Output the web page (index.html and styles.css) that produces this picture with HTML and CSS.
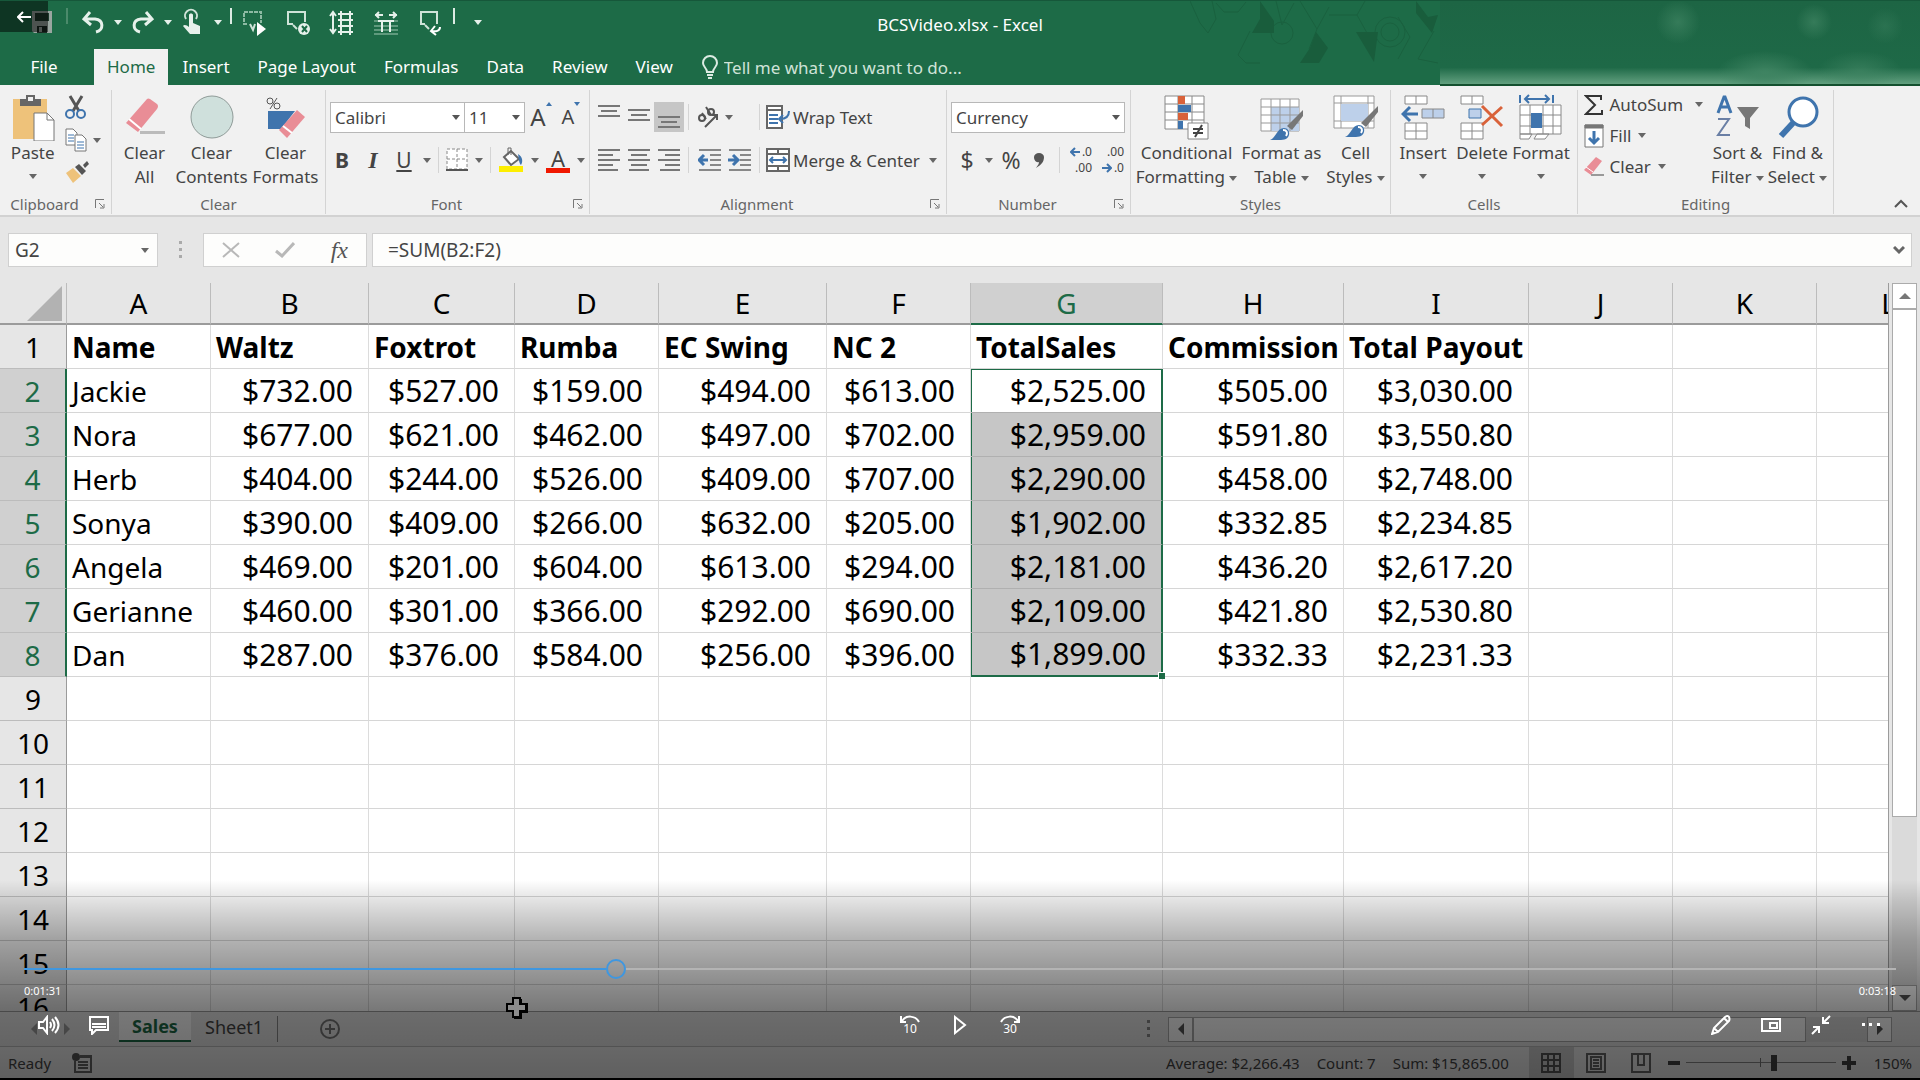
FILE: index.html
```html
<!DOCTYPE html>
<html lang="en">
<head>
    <meta charset="utf-8">
    <title>BCSVideo.xlsx - Excel</title>
    <link rel="stylesheet" href="styles.css">
</head>
<body>
<div class="app">

    <!-- Title bar -->
    <header class="top">
        <svg class="pattern" width="730" height="85" viewBox="0 0 730 85" aria-hidden="true">
            <defs>
                <linearGradient id="fade" x1="0" y1="0" x2="0" y2="1">
                    <stop offset="0" stop-color="#1d6544"/>
                    <stop offset=".8" stop-color="#1e6947"/>
                    <stop offset="1" stop-color="#62a07f"/>
                </linearGradient>
                <radialGradient id="spot">
                    <stop offset="0" stop-color="#3f8462"/>
                    <stop offset="1" stop-color="#3f8462" stop-opacity="0"/>
                </radialGradient>
            </defs>
            <g fill="none" stroke="#1a613f" stroke-width="1">
                <path d="M0 0l10 22 8 10 8-14-4-18M26 2l8 9h14l8-10M60 30l-12 24 8 8h14M86 0l6 24 12-22M110 0l17 28 12-22M127 28l-8 20M139 14h28l8-14M167 14l10 18M208 16l12 20-12 22M244 30l-16 28 20 4"/>
                <circle cx="92" cy="32" r="11"/>
                <circle cx="200" cy="31" r="15"/>
                <circle cx="200" cy="31" r="9"/>
            </g>
            <path fill="#195d3c" d="M70 0l14 20v12H62l8-14zM126 31l12 16-9 15h-19l10-15zM166 31h22l-4 30zM226 0l12 16 10-2-6 18-16-20z"/>
            <path fill="url(#fade)" d="M250 0h480v83H250z"/>
            <circle cx="488" cy="21" r="22" fill="url(#spot)" opacity=".7"/>
            <circle cx="624" cy="21" r="18" fill="url(#spot)" opacity=".7"/>
            <circle cx="695" cy="25" r="18" fill="url(#spot)" opacity=".4"/>
            <ellipse cx="575" cy="72" rx="48" ry="22" fill="url(#spot)"/>
            <ellipse cx="670" cy="70" rx="42" ry="20" fill="url(#spot)" opacity=".7"/>
            <path fill="#14502f" d="M250 83h480v2H250z"/>
        </svg>

        <div class="title-row">
            <div class="quick">
                <button aria-label="Save"><svg width="24" height="26" viewBox="0 0 24 26"><path fill="#9aa6a0" d="M2 2h20v22H4l-2-2z"/><path fill="#203a2d" d="M5 4h14v8H5z"/><path fill="#1b2b23" d="M7 17h10v7H7z"/><path fill="#9aa6a0" d="M9 18h3v5H9z"/></svg></button>
                <span class="bar dim"></span>
                <button aria-label="Undo"><svg width="26" height="26" viewBox="0 0 26 26" fill="none" stroke="#e6f1eb" stroke-width="3"><path d="M10 3L4 10l7 6M5 10h10c9 1 9 11 1 13"/></svg></button>
                <span class="caret light"></span>
                <button aria-label="Redo"><svg width="26" height="26" viewBox="0 0 26 26" fill="none" stroke="#e6f1eb" stroke-width="3"><path d="M16 3l6 7-7 6M21 10H11c-9 1-9 11-1 13"/></svg></button>
                <span class="caret light"></span>
                <button aria-label="Touch mode"><svg width="26" height="28" viewBox="0 0 26 28"><path d="M6 11a6 6 0 1 1 10 0" fill="none" stroke="#cfe3d8" stroke-width="2"/><path fill="#e6f1eb" d="M9 7c0-2 4-2 4 0v8l7 3v8H10l-7-8c1-2 4-1 6 1z"/></svg></button>
                <span class="caret light"></span>
                <span class="bar"></span>
            </div>
            <div class="quick wide">
                <button aria-label="Run"><svg width="26" height="28" viewBox="0 0 26 28" fill="none"><path d="M6 16H3V4h17v11" stroke="#8dbaa3" stroke-width="2" stroke-dasharray="4 1"/><path d="M9 16l3 6 2-6" stroke="#cfe3d8" stroke-width="2"/><path fill="#fff" d="M16 14l9 7-9 7z"/></svg></button>
                <button aria-label="Remove"><svg width="26" height="28" viewBox="0 0 26 28" fill="none"><path d="M8 16H3V4h17v10M8 17l4 4" stroke="#cfe3d8" stroke-width="2"/><circle cx="19" cy="21" r="6" fill="#e6f1eb"/><path d="M17 18l5 6m0-6l-5 6" stroke="#1d6b47" stroke-width="2"/></svg></button>
                <button aria-label="Row height"><svg width="26" height="28" viewBox="0 0 26 28" fill="none" stroke="#e6f1eb" stroke-width="2"><path d="M4 4v21M1 8l3-4 3 4M1 21l3 4 3-4"/><path d="M9 6h15M9 12h15M9 18h15M9 24h15M12 3v24M21 3v24"/></svg></button>
                <button aria-label="Column width"><svg width="26" height="28" viewBox="0 0 26 28" fill="none" stroke="#e6f1eb" stroke-width="2"><path d="M2 7h8M16 7h8M6 4L3 7l3 3M20 4l3 3-3 3"/><path d="M1 13h24M1 18h24M1 22h24M1 26h24" stroke="#5f9a7d"/><path d="M9 13v11M17 13v11M5 13h16"/></svg></button>
                <button aria-label="Send"><svg width="26" height="28" viewBox="0 0 26 28" fill="none" stroke="#cfe3d8" stroke-width="2"><path d="M8 16H4V4h16v12M8 17l4 4"/><path d="M23 19c0 4-4 5-9 4M18 18l-4 5 5 4" stroke="#fff"/></svg></button>
            </div>
            <div class="quick tail">
                <span class="bar"></span>
                <button aria-label="Customize toolbar"><span class="caret light"></span></button>
            </div>
            <h1 class="doc-title">BCSVideo.xlsx - Excel</h1>
        </div>

        <nav class="tabs">
            <a href="#" class="tab file">File</a>
            <a href="#" class="tab active">Home</a>
            <a href="#" class="tab">Insert</a>
            <a href="#" class="tab">Page Layout</a>
            <a href="#" class="tab">Formulas</a>
            <a href="#" class="tab">Data</a>
            <a href="#" class="tab">Review</a>
            <a href="#" class="tab">View</a>
            <svg class="bulb" width="18" height="24" viewBox="0 0 18 24" fill="none" stroke="#dcebe3" stroke-width="2"><path d="M6 17c0-4-4-5-4-9a7 7 0 0 1 14 0c0 4-4 5-4 9z"/><path d="M6 20h6M7 23h4"/></svg>
            <input class="tell" type="text" aria-label="Tell me" placeholder="Tell me what you want to do...">
        </nav>

        <button class="back" aria-label="Back"><svg width="14" height="12" viewBox="0 0 14 12" fill="none" stroke="#fff" stroke-width="2"><path d="M6 1L1 6l5 5M1 6h13"/></svg></button>
    </header>

    <!-- Ribbon -->
    <div class="ribbon">
        <section class="group clipboard">
            <div class="body">
                <button class="big">
                    <svg width="44" height="48" viewBox="0 0 44 48"><path fill="#eec27a" d="M2 6h34v40H2z"/><path fill="#666" d="M9 6h6V2h9v4h6v7H9z"/><path fill="#f0f0f0" d="M17 4h5v4h-5z"/><path fill="#fff" stroke="#777" d="M23 20h13l7 7v21H23z"/><path fill="none" stroke="#777" d="M36 20v7h7"/></svg>
                    <span>Paste</span><span class="caret"></span>
                </button>
                <div class="stack">
                    <button aria-label="Cut"><svg width="22" height="24" viewBox="0 0 22 24" fill="none" stroke-width="2"><path d="M5 1l9 15M17 1L8 16" stroke="#555" stroke-width="3"/><circle cx="5" cy="19" r="4" stroke="#3f74ad"/><circle cx="16" cy="19" r="4" stroke="#3f74ad"/></svg></button>
                    <button aria-label="Copy"><svg width="22" height="24" viewBox="0 0 22 24" fill="#fff" stroke="#777"><path d="M1 1h7l4 4v12H1z"/><path d="M10 7h7l4 4v12H10z"/><path d="M3 7h6M3 10h6M3 13h6M12 14h7M12 17h7M12 20h7" stroke="#3f74ad"/></svg><span class="caret"></span></button>
                    <button aria-label="Format painter"><svg width="24" height="22" viewBox="0 0 24 22"><path fill="#eec27a" d="M1 12l7-5 8 8-8 7z"/><path fill="#555" d="M10 6l4-3 7 7-4 4zM18 4l4-4 2 3-4 4z"/></svg></button>
                </div>
            </div>
            <div class="label"><h2>Clipboard</h2><button class="launch" aria-label="Clipboard settings"><svg width="10" height="10" viewBox="0 0 10 10" fill="none" stroke="#777"><path d="M.5 9V.5H9M4 4l4 4M9 5v4H5"/></svg></button></div>
        </section>

        <section class="group clear">
            <div class="body">
                <button class="big">
                    <svg width="42" height="46" viewBox="0 0 42 46"><path fill="#e98d96" d="M2 29L23 5q1-1 3 0l7 5q2 2 0 5L14 38z"/><path stroke="#fff" stroke-width="2" d="M5 25l12 10"/><path fill="#bbb" d="M16 37h25v3H16z"/></svg>
                    <span>Clear<br>All</span>
                </button>
                <button class="big">
                    <svg width="44" height="46" viewBox="0 0 44 46"><circle cx="22" cy="23" r="21" fill="#cfe0dc" stroke="#8f9b98"/></svg>
                    <span>Clear<br>Contents</span>
                </button>
                <button class="big">
                    <svg width="42" height="46" viewBox="0 0 42 46"><g fill="none" stroke="#555"><circle cx="5" cy="7" r="3"/><circle cx="12" cy="12" r="3"/><path d="M12 4L5 15"/></g><path fill="#3f74ad" d="M3 17h27L16 35H3z"/><path fill="#e98d96" d="M14 36l18-20 8 7-18 21z"/><path stroke="#fff" stroke-width="2" d="M18 32l9 7"/></svg>
                    <span>Clear<br>Formats</span>
                </button>
            </div>
            <div class="label"><h2>Clear</h2></div>
        </section>

        <section class="group font">
            <div class="rows">
                <div class="row">
                    <select class="face" aria-label="Font"><option>Calibri</option></select>
                    <select class="size" aria-label="Font size"><option>11</option></select>
                    <button class="grow" aria-label="Increase font size">A<i class="up"></i></button>
                    <button class="shrink" aria-label="Decrease font size">A<i class="down"></i></button>
                </div>
                <div class="row styles-row">
                    <button class="glyph"><b>B</b></button>
                    <button class="glyph serif"><i>I</i></button>
                    <button class="glyph"><u>U</u></button>
                    <span class="caret"></span>
                    <span class="rule"></span>
                    <button aria-label="Borders"><svg width="22" height="24" viewBox="0 0 22 24" fill="none" stroke="#888" stroke-dasharray="3 2"><path fill="#fff" d="M1 1h20v20H1zM11 1v20M1 11h20"/><path d="M0 22h22" stroke="#555" stroke-width="2" stroke-dasharray="none"/></svg></button>
                    <span class="caret"></span>
                    <span class="rule"></span>
                    <button aria-label="Fill color"><svg width="26" height="26" viewBox="0 0 26 26"><path fill="#fff" stroke="#666" stroke-width="2" d="M6 10l7-6 8 8-8 6z"/><path fill="none" stroke="#666" d="M10 8V1h3v7"/><path fill="#3f74ad" d="M20 7c5 3 5 8 3 11-2-2-2-5-3-11z"/><path fill="#fdee00" d="M1 19h24v6H1z"/></svg></button>
                    <span class="caret"></span>
                    <button class="ink" aria-label="Font color">A</button>
                    <span class="caret"></span>
                </div>
            </div>
            <div class="label"><h2>Font</h2><button class="launch" aria-label="Font settings"><svg width="10" height="10" viewBox="0 0 10 10" fill="none" stroke="#777"><path d="M.5 9V.5H9M4 4l4 4M9 5v4H5"/></svg></button></div>
        </section>

        <section class="group align">
            <div class="rows">
                <div class="row">
                    <button class="al" aria-label="Top align"><svg width="22" height="24" viewBox="0 0 22 24" stroke="#777" stroke-width="2"><path d="M0 1h22M3 6h16M0 11h22"/></svg></button>
                    <button class="al" aria-label="Middle align"><svg width="22" height="24" viewBox="0 0 22 24" stroke="#777" stroke-width="2"><path d="M0 5h22M3 10h16M0 15h22"/></svg></button>
                    <button class="al on" aria-label="Bottom align"><svg width="22" height="24" viewBox="0 0 22 24" stroke="#777" stroke-width="2"><path d="M0 12h22M3 17h16M0 22h22"/></svg></button>
                    <span class="rule"></span>
                    <button class="orient" aria-label="Orientation"><svg width="22" height="22" viewBox="0 0 22 22" fill="none" stroke="#555" stroke-width="2"><circle cx="5" cy="12" r="3"/><path d="M5 7l4 6M9 1l5 8"/><circle cx="14" cy="6" r="3"/><path d="M8 21L20 9M15 9h5v5"/></svg></button>
                    <span class="caret"></span>
                    <span class="rule far"></span>
                    <button class="text"><svg width="24" height="24" viewBox="0 0 24 24" fill="#fff" stroke="#666"><path d="M1 1h15v22H1zM1 5h15" stroke-width="2"/><path d="M3 10h9M3 14h9M3 18h9" stroke="#3f74ad" stroke-width="2"/><path d="M23 6c0 6-4 8-9 8M17 10l-4 4 4 4" fill="none" stroke="#3f74ad" stroke-width="2"/></svg>Wrap Text</button>
                </div>
                <div class="row">
                    <button class="al" aria-label="Align left"><svg width="22" height="24" viewBox="0 0 22 24" stroke="#777" stroke-width="2"><path d="M0 2h22M0 7h15M0 12h22M0 17h15M0 22h20"/></svg></button>
                    <button class="al" aria-label="Center"><svg width="22" height="24" viewBox="0 0 22 24" stroke="#777" stroke-width="2"><path d="M0 2h22M3 7h16M0 12h22M3 17h16M1 22h20"/></svg></button>
                    <button class="al" aria-label="Align right"><svg width="22" height="24" viewBox="0 0 22 24" stroke="#777" stroke-width="2"><path d="M0 2h22M7 7h15M0 12h22M7 17h15M2 22h20"/></svg></button>
                    <span class="rule"></span>
                    <button class="al" aria-label="Decrease indent"><svg width="24" height="24" viewBox="0 0 24 24" fill="none" stroke="#888" stroke-width="2"><path d="M1 2h22M12 7h11M12 12h11M12 17h11M1 22h22"/><path d="M10 12H2M6 7l-5 5 5 5" stroke="#3f74ad" stroke-width="3"/></svg></button>
                    <button class="al" aria-label="Increase indent"><svg width="24" height="24" viewBox="0 0 24 24" fill="none" stroke="#888" stroke-width="2"><path d="M1 2h22M12 7h11M12 12h11M12 17h11M1 22h22"/><path d="M0 12h9M5 7l5 5-5 5" stroke="#3f74ad" stroke-width="3"/></svg></button>
                    <span class="rule"></span>
                    <button class="text"><svg width="24" height="24" viewBox="0 0 24 24" fill="#fff" stroke="#666" stroke-width="2"><path d="M1 1h22v22H1zM1 6h22M1 18h22M12 1v5M12 18v5"/><path d="M4 12h16M7 9l-3 3 3 3M17 9l3 3-3 3" fill="none" stroke="#3f74ad"/></svg>Merge &amp; Center<span class="caret"></span></button>
                </div>
            </div>
            <div class="label"><h2>Alignment</h2><button class="launch" aria-label="Alignment settings"><svg width="10" height="10" viewBox="0 0 10 10" fill="none" stroke="#777"><path d="M.5 9V.5H9M4 4l4 4M9 5v4H5"/></svg></button></div>
        </section>

        <section class="group number">
            <div class="rows">
                <div class="row"><select class="format" aria-label="Number format"><option>Currency</option></select></div>
                <div class="row">
                    <button class="sign">$</button>
                    <span class="caret"></span>
                    <button class="sign">%</button>
                    <button class="comma" aria-label="Comma style"><svg width="12" height="16" viewBox="0 0 12 16"><path fill="#555" d="M1 5a5 4 0 0 1 10 0c0 5-3 8-8 11 2-3 3-4 3-6-3 1-5-2-5-5z"/></svg></button>
                    <span class="rule"></span>
                    <button class="dec"><span><svg width="10" height="10" viewBox="0 0 10 10" fill="none" stroke="#3f74ad" stroke-width="2"><path d="M10 5H2M5 1L1 5l4 4"/></svg>.0</span><span>.00</span></button>
                    <button class="dec"><span>.00</span><span><svg width="10" height="10" viewBox="0 0 10 10" fill="none" stroke="#3f74ad" stroke-width="2"><path d="M0 5h8M5 1l4 4-4 4"/></svg>.0</span></button>
                </div>
            </div>
            <div class="label"><h2>Number</h2><button class="launch" aria-label="Number settings"><svg width="10" height="10" viewBox="0 0 10 10" fill="none" stroke="#777"><path d="M.5 9V.5H9M4 4l4 4M9 5v4H5"/></svg></button></div>
        </section>

        <section class="group styles">
            <div class="body">
                <button class="big">
                    <svg width="46" height="46" viewBox="0 0 46 46"><path fill="#fff" stroke="#888" d="M1 2h39v33H1zM1 10h39M1 18h39M1 26h39M14 2v33M28 2v33"/><path fill="#d9623a" d="M14 2h7v8h-7zM14 19h10v7H14z"/><path fill="#3f74ad" d="M14 11h13v7H14zM14 27h5v8h-5z"/><path fill="#fff" stroke="#888" d="M24 29h20v16H24z"/><path stroke="#444" stroke-width="2" d="M29 35h10M29 39h10M38 31l-7 12"/></svg>
                    <span>Conditional<br>Formatting <i class="caret"></i></span>
                </button>
                <button class="big">
                    <svg width="46" height="46" viewBox="0 0 46 46"><path fill="#fff" stroke="#999" d="M2 5h38v32H2z"/><path fill="#bdd0ea" d="M12 13h28v24H12z"/><path fill="none" stroke="#999" d="M2 13h38M2 21h38M2 29h38M12 5v32M21 5v32M31 5v32"/><path fill="#777" d="M44 16v6L33 36l-5-4z"/><path fill="#3f74ad" d="M11 46c6-2 7-12 14-12s8 12-3 12z"/><path d="M24 36c4 0 5 3 3 6" fill="none" stroke="#fff" stroke-width="2"/></svg>
                    <span>Format as<br>Table <i class="caret"></i></span>
                </button>
                <button class="big">
                    <svg width="46" height="46" viewBox="0 0 46 46"><path fill="#fff" stroke="#999" d="M1 2h40v32H1zM1 9h40M1 27h40M8 2v32M35 2v32"/><path fill="#bdd0ea" d="M8 10h27v17H8z"/><path fill="#777" d="M45 12v6L33 33l-5-4z"/><path fill="#3f74ad" d="M12 43c6-2 7-12 14-12s8 12-3 12z"/><path d="M25 33c4 0 5 3 3 6" fill="none" stroke="#fff" stroke-width="2"/></svg>
                    <span>Cell<br>Styles <i class="caret"></i></span>
                </button>
            </div>
            <div class="label"><h2>Styles</h2></div>
        </section>

        <section class="group cells">
            <div class="body">
                <button class="big">
                    <svg width="44" height="46" viewBox="0 0 44 46" fill="#fff" stroke="#888"><path d="M4 2h22v8H4zM15 2v8M4 29h22v16H4zM15 29v16M4 37h22"/><path fill="#bdd0ea" d="M21 15h22v9H21zM32 15v9"/><path d="M17 20H2M9 13l-7 7 7 7" fill="none" stroke="#3f74ad" stroke-width="3"/></svg>
                    <span>Insert</span><span class="caret"></span>
                </button>
                <button class="big">
                    <svg width="44" height="46" viewBox="0 0 44 46" fill="#fff" stroke="#888"><path d="M1 2h22v8H1zM12 2v8M1 29h22v16H1zM12 29v16M1 37h22"/><path fill="#bdd0ea" stroke="#3f74ad" d="M9 15h12v9H9z"/><path d="M22 12l20 20M42 13L22 31" fill="none" stroke="#d9623a" stroke-width="3"/></svg>
                    <span>Delete</span><span class="caret"></span>
                </button>
                <button class="big">
                    <svg width="44" height="46" viewBox="0 0 44 46" fill="#fff" stroke="#888"><path d="M1 11h41v29H1zM1 21h41M1 32h41M11 11v29M24 11v29M34 11v29M1 40h12l-3 5H1zM15 45l3-5h12l-4 5z"/><path fill="#3f74ad" stroke="none" d="M12 19h11v15H12z"/><path d="M6 5h24M10 1L6 5l4 4M26 1l4 4-4 4M1 1v8M34 1v8" fill="none" stroke="#3f74ad" stroke-width="2"/></svg>
                    <span>Format</span><span class="caret"></span>
                </button>
            </div>
            <div class="label"><h2>Cells</h2></div>
        </section>

        <section class="group editing">
            <div class="body">
                <div class="lines">
                    <button class="text"><svg width="20" height="20" viewBox="0 0 20 20" fill="none" stroke="#333" stroke-width="2"><path d="M17 5V1H2l9 9-9 9h16v-4"/></svg>AutoSum<span class="caret"></span></button>
                    <button class="text"><svg width="20" height="24" viewBox="0 0 20 24" fill="#fff" stroke="#777"><path d="M1 1h18v22H1z"/><path fill="#777" d="M1 1h18v3H1z"/><path d="M10 7v12M5 14l5 5 5-5" fill="none" stroke="#3f74ad" stroke-width="3"/></svg>Fill<span class="caret"></span></button>
                    <button class="text"><svg width="20" height="22" viewBox="0 0 20 22"><path fill="#e98d96" d="M0 14L12 1l6 4L7 19z"/><path stroke="#fff" d="M2 11l7 5"/><path fill="#999" d="M7 18h13v2H7z"/></svg>Clear<span class="caret"></span></button>
                </div>
                <button class="big">
                    <svg width="44" height="46" viewBox="0 0 44 46" fill="none" stroke-width="2"><path d="M2 19L8 3h1l6 16M4 13h9" stroke="#3f74ad" stroke-width="3"/><path d="M2 25h11L2 41h12" stroke="#6a7fa5"/><path fill="#777" d="M21 13h22l-9 11v11l-5-3v-8z"/></svg>
                    <span>Sort &amp;<br>Filter <i class="caret"></i></span>
                </button>
                <button class="big">
                    <svg width="44" height="46" viewBox="0 0 44 46" fill="#fff" stroke="#3f74ad"><circle cx="27" cy="18" r="14" stroke-width="3"/><path d="M17 29L5 42" stroke-width="6"/></svg>
                    <span>Find &amp;<br>Select <i class="caret"></i></span>
                </button>
            </div>
            <div class="label"><h2>Editing</h2></div>
        </section>

        <button class="collapse" aria-label="Collapse ribbon"><svg width="14" height="10" viewBox="0 0 14 10" fill="none" stroke="#555" stroke-width="2"><path d="M1 8l6-6 6 6"/></svg></button>
    </div>

    <!-- Formula bar -->
    <div class="formula-bar">
        <div class="name-box"><input type="text" value="G2" aria-label="Name box"><span class="caret"></span></div>
        <span class="grip"></span>
        <div class="fx-box">
            <button aria-label="Cancel"><svg width="18" height="16" viewBox="0 0 18 16" stroke="#b8b8b8" stroke-width="2"><path d="M1 1l16 14M17 1L1 15"/></svg></button>
            <button aria-label="Enter"><svg width="20" height="16" viewBox="0 0 20 16" fill="none" stroke="#b8b8b8" stroke-width="3"><path d="M1 9l6 5L19 1"/></svg></button>
            <button class="fx"><i>fx</i></button>
        </div>
        <div class="formula"><input type="text" value="=SUM(B2:F2)" aria-label="Formula"><svg width="12" height="9" viewBox="0 0 12 9" fill="none" stroke="#666" stroke-width="3"><path d="M1 1l5 5 5-5"/></svg></div>
    </div>

    <!-- Sheet -->
    <main class="sheet">
        <div class="grid">
            <table>
                <colgroup><col class="w67"><col class="w144"><col class="w158"><col class="w146"><col class="w144"><col class="w168"><col class="w144"><col class="w192"><col class="w181"><col class="w185"><col class="w144"><col class="w144"><col class="w144"></colgroup>
                <thead>
                    <tr><th class="corner"><svg width="35" height="35" viewBox="0 0 35 35"><path fill="#b2b2b2" d="M35 0v35H0z"/></svg></th><th>A</th><th>B</th><th>C</th><th>D</th><th>E</th><th>F</th><th class="picked">G</th><th>H</th><th>I</th><th>J</th><th>K</th><th>L</th></tr>
                </thead>
                <tbody>
                    <tr class="names"><th>1</th><td>Name</td><td>Waltz</td><td>Foxtrot</td><td>Rumba</td><td>EC Swing</td><td>NC 2</td><td>TotalSales</td><td>Commission</td><td>Total Payout</td><td></td><td></td><td></td></tr>
                    <tr class="data first"><th>2</th><td>Jackie</td><td>$732.00</td><td>$527.00</td><td>$159.00</td><td>$494.00</td><td>$613.00</td><td class="sel">$2,525.00</td><td>$505.00</td><td>$3,030.00</td><td></td><td></td><td></td></tr>
                    <tr class="data"><th>3</th><td>Nora</td><td>$677.00</td><td>$621.00</td><td>$462.00</td><td>$497.00</td><td>$702.00</td><td class="sel">$2,959.00</td><td>$591.80</td><td>$3,550.80</td><td></td><td></td><td></td></tr>
                    <tr class="data"><th>4</th><td>Herb</td><td>$404.00</td><td>$244.00</td><td>$526.00</td><td>$409.00</td><td>$707.00</td><td class="sel">$2,290.00</td><td>$458.00</td><td>$2,748.00</td><td></td><td></td><td></td></tr>
                    <tr class="data"><th>5</th><td>Sonya</td><td>$390.00</td><td>$409.00</td><td>$266.00</td><td>$632.00</td><td>$205.00</td><td class="sel">$1,902.00</td><td>$332.85</td><td>$2,234.85</td><td></td><td></td><td></td></tr>
                    <tr class="data"><th>6</th><td>Angela</td><td>$469.00</td><td>$201.00</td><td>$604.00</td><td>$613.00</td><td>$294.00</td><td class="sel">$2,181.00</td><td>$436.20</td><td>$2,617.20</td><td></td><td></td><td></td></tr>
                    <tr class="data"><th>7</th><td>Gerianne</td><td>$460.00</td><td>$301.00</td><td>$366.00</td><td>$292.00</td><td>$690.00</td><td class="sel">$2,109.00</td><td>$421.80</td><td>$2,530.80</td><td></td><td></td><td></td></tr>
                    <tr class="data last"><th>8</th><td>Dan</td><td>$287.00</td><td>$376.00</td><td>$584.00</td><td>$256.00</td><td>$396.00</td><td class="sel">$1,899.00<i class="handle"></i></td><td>$332.33</td><td>$2,231.33</td><td></td><td></td><td></td></tr>
                    <tr><th>9</th><td></td><td></td><td></td><td></td><td></td><td></td><td></td><td></td><td></td><td></td><td></td><td></td></tr>
                    <tr><th>10</th><td></td><td></td><td></td><td></td><td></td><td></td><td></td><td></td><td></td><td></td><td></td><td></td></tr>
                    <tr><th>11</th><td></td><td></td><td></td><td></td><td></td><td></td><td></td><td></td><td></td><td></td><td></td><td></td></tr>
                    <tr><th>12</th><td></td><td></td><td></td><td></td><td></td><td></td><td></td><td></td><td></td><td></td><td></td><td></td></tr>
                    <tr><th>13</th><td></td><td></td><td></td><td></td><td></td><td></td><td></td><td></td><td></td><td></td><td></td><td></td></tr>
                    <tr><th>14</th><td></td><td></td><td></td><td></td><td></td><td></td><td></td><td></td><td></td><td></td><td></td><td></td></tr>
                    <tr><th>15</th><td></td><td></td><td></td><td></td><td></td><td></td><td></td><td></td><td></td><td></td><td></td><td></td></tr>
                    <tr><th>16</th><td></td><td></td><td></td><td></td><td></td><td></td><td></td><td></td><td></td><td></td><td></td><td></td></tr>
                </tbody>
            </table>
        </div>
        <div class="vscroll">
            <button aria-label="Scroll up"><i class="arrow up-arrow"></i></button>
            <div class="thumb"></div>
            <div class="track"></div>
            <button aria-label="Scroll down"><i class="arrow down-arrow"></i></button>
        </div>
    </main>

    <!-- Sheet tabs -->
    <div class="sheet-bar">
        <div class="sheet-nav"><i class="arrow left-arrow"></i><i class="arrow right-arrow"></i></div>
        <button class="sheet-tab current">Sales</button>
        <button class="sheet-tab">Sheet1</button>
        <button class="add" aria-label="New sheet"><svg width="22" height="22" viewBox="0 0 22 22" fill="none" stroke="#777" stroke-width="2"><circle cx="11" cy="11" r="9"/><path d="M11 6v10M6 11h10"/></svg></button>
        <span class="grip hgrip"></span>
        <div class="hscroll">
            <button aria-label="Scroll left"><i class="arrow left-arrow"></i></button>
            <div class="thumb"></div>
            <div class="track"></div>
            <button aria-label="Scroll right"><i class="arrow right-arrow"></i></button>
        </div>
    </div>

    <!-- Status bar -->
    <footer class="status">
        <span>Ready</span>
        <svg class="macro" width="22" height="20" viewBox="0 0 22 20"><path fill="none" stroke="#666" stroke-width="2" d="M4 8v11h16V3h-9M7 9h10M7 12h10M7 15h10"/><path fill="#666" d="M9 2h12v3H9z"/><circle cx="5" cy="4" r="4" fill="#555"/></svg>
        <div class="totals"><span>Average: $2,266.43</span><span>Count: 7</span><span>Sum: $15,865.00</span></div>
        <div class="views">
            <button class="on" aria-label="Normal"><svg width="20" height="20" viewBox="0 0 20 20" fill="none" stroke="#555" stroke-width="2"><path d="M1 1h18v18H1zM7 1v18M13 1v18M1 7h18M1 13h18"/></svg></button>
            <button aria-label="Page layout"><svg width="20" height="20" viewBox="0 0 20 20" fill="none" stroke="#666" stroke-width="2"><path d="M1 1h18v18H1zM5 4h10v12H5zM7 7h6M7 10h6M7 13h6"/></svg></button>
            <button aria-label="Page break preview"><svg width="20" height="20" viewBox="0 0 20 20" fill="none" stroke="#666" stroke-width="2"><path d="M1 1h18v18H1zM7 1v11h6V1M13 12V1"/></svg></button>
        </div>
        <div class="zoom">
            <button aria-label="Zoom out"><svg width="12" height="12" viewBox="0 0 12 12"><path fill="#444" d="M0 4h12v4H0z"/></svg></button>
            <input type="range" min="0" max="100" value="59" aria-label="Zoom">
            <button aria-label="Zoom in"><svg width="14" height="14" viewBox="0 0 14 14"><path fill="#444" d="M0 5h5V0h4v5h5v4H9v5H5V9H0z"/></svg></button>
            <span>150%</span>
        </div>
    </footer>
</div>

<!-- Video player controls, over the sheet -->
<div class="player">
    <input class="seek" type="range" min="0" max="1000" value="314" aria-label="Seek">
    <div class="times"><span>0:01:31</span><span>0:03:18</span></div>
    <div class="controls">
        <div class="set">
            <button aria-label="Volume"><svg width="22" height="20" viewBox="0 0 22 20"><path d="M1 7h4l4-5v16l-4-5H1zM12 7q2 3 0 6M14 4q5 6 0 12M17 2q7 8 0 16"/></svg></button>
            <button aria-label="Subtitles"><svg width="20" height="20" viewBox="0 0 20 20"><path d="M1 2h18v13H7l-4 4v-4H1zM3 9h14M3 12h14"/></svg></button>
        </div>
        <div class="set">
            <button class="skip" aria-label="Back 10 seconds"><svg width="20" height="8" viewBox="0 0 20 8"><path d="M19 7C15 0 6 0 2 6M1 1v6h5"/></svg>10</button>
            <button aria-label="Play"><svg width="14" height="20" viewBox="0 0 14 20"><path d="M2 2l10 8-10 8z"/></svg></button>
            <button class="skip" aria-label="Forward 30 seconds"><svg width="20" height="8" viewBox="0 0 20 8"><path d="M1 7C5 0 14 0 18 6M19 1v6h-5"/></svg>30</button>
        </div>
        <div class="set right">
            <button aria-label="Edit"><svg width="20" height="20" viewBox="0 0 20 20"><path d="M1 19l2-6L14 2q3-2 4 0t0 4L7 17zM3 13l4 4M13 3l4 4"/></svg></button>
            <button aria-label="Mini view"><svg width="20" height="14" viewBox="0 0 20 14"><path d="M1 1h18v12H1z"/><path d="M9 5h7v5H9z"/></svg></button>
            <button aria-label="Exit full screen"><svg width="20" height="20" viewBox="0 0 20 20"><path d="M19 1l-7 7M12 2v6h6M1 19l7-7M2 12h6v6"/></svg></button>
            <button aria-label="More"><svg width="18" height="4" viewBox="0 0 18 4"><path fill="#fff" stroke="none" d="M0 0h3v3H0zM7 0h3v3H7zM15 0h3v3h-3z"/></svg></button>
        </div>
    </div>
</div>
<svg class="pointer" width="24" height="24" viewBox="0 0 24 24" aria-hidden="true"><path d="M8 2h7v6h6v7h-6v6H8v-6H2V8h6z" fill="#8c8c8c" stroke="#000" stroke-width="2"/><path d="M16 3v5h6v8h-6v6H9" fill="none" stroke="#000" stroke-width="2"/></svg>
</body>
</html>
```
FILE: styles.css
```css
* {
    box-sizing: border-box;
}

body {
    margin: 0;
    font-family: "Noto Sans", "Open Sans", sans-serif;
    font-size: 17px;
    color: #444;
    background: #000;
    overflow: hidden;
}

button {
    background: none;
    border: none;
    padding: 0;
    margin: 0;
    font: inherit;
    color: inherit;
    display: flex;
    align-items: center;
    justify-content: center;
}

input, select {
    font: inherit;
    color: inherit;
    border: none;
    background: none;
    padding: 0;
    margin: 0;
}

h1, h2 {
    margin: 0;
    font-weight: normal;
}

svg {
    display: block;
    flex: none;
}

.app {
    display: flex;
    flex-direction: column;
    height: 100vh;
    border-bottom: 2px solid #000;
    background: #e6e6e6;
}

.caret {
    display: inline-block;
    flex: none;
    border: 4px solid transparent;
    border-top: 5px solid #666;
    border-bottom: none;
    vertical-align: middle;
}

.caret.light {
    border-top-color: #e6f1eb;
}

/* Title bar and tabs */
.top {
    position: relative;
    background: #1d6b47;
    border-top: 1px solid #16573a;
    color: #fff;
}

.pattern {
    position: absolute;
    top: 0;
    right: 0;
}

.title-row {
    position: relative;
    display: flex;
    height: 48px;
    padding-left: 30px;
}

.quick {
    display: flex;
    align-items: center;
    gap: 8px;
    height: 42px;
}

.quick.wide {
    gap: 18px;
    padding-left: 9px;
}

.quick.tail {
    gap: 19px;
    padding-left: 10px;
}

.bar {
    width: 2px;
    height: 16px;
    margin-bottom: 12px;
    background: #dcebe3;
}

.bar.dim {
    margin: 0 4px 12px;
    background: #4b8a6b;
}

.doc-title {
    position: absolute;
    left: 0;
    right: 0;
    top: 10px;
    font-size: 17px;
    line-height: 28px;
    text-align: center;
}

.tabs {
    position: relative;
    display: flex;
    align-items: center;
    height: 36px;
}

.tab {
    padding: 0 14px;
    line-height: 36px;
    color: #fff;
    text-decoration: none;
}

.tab.file {
    width: 88px;
    margin-right: 6px;
    text-align: center;
}

.tab.active {
    padding: 0 13px;
    background: #f1f1f1;
    color: #1d6b47;
}

.bulb {
    margin: 0 5px 0 14px;
}

.tell {
    width: 280px;
}

.tell::placeholder {
    color: #cfe3d8;
}

.back {
    position: absolute;
    left: 0;
    top: 0;
    width: 48px;
    height: 31px;
    background: rgba(0, 0, 0, 0.5);
}

/* Ribbon */
.ribbon {
    display: flex;
    height: 132px;
    background: #f1f1f1;
    border-bottom: 2px solid #d2d2d2;
}

.group {
    display: flex;
    flex-direction: column;
    flex: none;
    margin: 5px 0 1px;
    border-right: 1px solid #d4d4d4;
}

.clipboard { width: 112px; }
.clear { width: 214px; }
.font { width: 264px; }
.align { width: 357px; }
.number { width: 184px; }
.styles { width: 260px; }
.cells { width: 187px; }
.editing { width: 256px; }

.body {
    display: flex;
    justify-content: center;
    flex: 1;
}

.label {
    display: flex;
    align-items: center;
    height: 20px;
    padding: 0 6px;
}

.label h2 {
    flex: 1;
    font-size: 15px;
    line-height: 20px;
    text-align: center;
    color: #666;
}

.launch {
    margin-left: 12px;
}

.big {
    flex-direction: column;
    justify-content: flex-start;
    width: 70px;
    padding-top: 3px;
    line-height: 24px;
    white-space: nowrap;
}

.big svg {
    height: 48px;
}

.big > .caret {
    margin-top: 9px;
}

.clipboard .big { width: 66px; }
.clear .big:first-child { width: 64px; }
.clear .big:last-child { width: 78px; }
.styles .big:first-child { width: 104px; }
.styles .big:nth-child(2) { width: 86px; }
.styles .big:last-child { width: 62px; }
.cells .body { padding-right: 4px; }
.cells .big { width: 59px; }
.editing .big { width: 60px; }

.stack {
    display: flex;
    flex-direction: column;
    gap: 9px;
    width: 46px;
    padding-top: 5px;
    align-items: flex-start;
}

.stack button {
    gap: 6px;
}

.rows {
    flex: 1;
    display: flex;
    flex-direction: column;
    padding: 11px 4px 0;
    gap: 11px;
}

.row {
    display: flex;
    align-items: center;
    height: 32px;
}

.rule {
    width: 1px;
    height: 26px;
    background: #d4d4d4;
}

select {
    appearance: none;
    height: 31px;
    padding: 0 4px;
    border: 1px solid #b8b8b8;
    background: #fff url("data:image/svg+xml,%3Csvg xmlns='http://www.w3.org/2000/svg' width='8' height='5'%3E%3Cpath fill='%23555' d='M0 0h8L4 5z'/%3E%3C/svg%3E") no-repeat right 4px center;
}

.face { width: 135px; }
.size { width: 61px; margin-left: -1px; }
.format { width: 174px; }

.grow, .shrink {
    align-items: flex-end;
    width: 32px;
    font-size: 24px;
    line-height: 30px;
}

.shrink {
    font-size: 20px;
    width: 28px;
}

.up, .down {
    align-self: flex-start;
    border: 3px solid transparent;
    border-bottom: 4px solid #3f74ad;
    border-top: none;
}

.down {
    border-top: 4px solid #3f74ad;
    border-bottom: none;
}

.styles-row {
    gap: 7px;
}

.glyph {
    width: 24px;
    font-size: 21px;
}

.serif {
    font-family: "Liberation Serif", serif;
    font-weight: bold;
    font-size: 24px;
}

.ink {
    width: 24px;
    height: 26px;
    border-bottom: 5px solid #f01800;
    font-size: 22px;
    line-height: 20px;
}

.align .rows {
    padding-left: 4px;
}

.al {
    width: 30px;
    height: 30px;
}

.al.on {
    background: #c6c6c6;
}

.align .rule {
    margin: 0 6px 0 4px;
}

.orient {
    width: 26px;
    margin-right: 4px;
}

.align .rule.far {
    margin: 0 6px 0 26px;
}

.text {
    gap: 3px;
    white-space: nowrap;
}

.text .caret {
    margin-left: 6px;
}

.number .row:last-child {
    gap: 6px;
    padding-left: 4px;
}

.sign {
    width: 24px;
    font-size: 23px;
}

.comma {
    margin: 0 8px 0 4px;
}

.dec {
    flex-direction: column;
    align-items: flex-end;
    font-size: 12px;
    line-height: 16px;
    width: 26px;
}

.dec span {
    display: flex;
    align-items: center;
    gap: 2px;
}

.lines {
    display: flex;
    flex-direction: column;
    align-items: flex-start;
    gap: 6px;
    width: 124px;
    padding-top: 2px;
}

.lines .text {
    height: 25px;
    gap: 6px;
}

.lines .caret {
    margin-left: 1px;
}

.lines .text:first-child .caret {
    margin-left: 6px;
}

.collapse {
    align-self: flex-end;
    margin: 0 12px 6px auto;
}

/* Formula bar */
.formula-bar {
    display: flex;
    align-items: center;
    height: 66px;
    padding: 0 8px;
    font-size: 19px;
}

.name-box, .fx-box, .formula {
    display: flex;
    align-items: center;
    height: 34px;
    background: #fdfdfc;
    border: 1px solid #d0d0d0;
}

.name-box {
    width: 150px;
    padding: 0 8px 0 6px;
}

.name-box input {
    flex: 1;
    min-width: 0;
}

.grip {
    width: 3px;
    height: 18px;
    margin: 0 21px;
    background: repeating-linear-gradient(#aaa 0 3px, transparent 3px 7px);
}

.fx-box {
    width: 164px;
    justify-content: space-between;
    padding: 0 18px;
    margin-right: 5px;
}

.fx {
    font-family: "Liberation Serif", serif;
    font-size: 24px;
    color: #555;
}

.formula {
    flex: 1;
    padding: 0 6px 0 15px;
}

.formula input {
    flex: 1;
}

/* Sheet */
.sheet {
    display: flex;
    flex: 1;
    min-height: 0;
}

.grid {
    flex: 1;
    min-width: 0;
    overflow: hidden;
    border-right: 1px solid #9b9b9b;
}

table {
    width: max-content;
    border-spacing: 0;
    color: #000;
    font-size: 28px;
}

.w67 { width: 67px; }
.w144 { width: 144px; }
.w146 { width: 146px; }
.w158 { width: 158px; }
.w168 { width: 168px; }
.w181 { width: 181px; }
.w185 { width: 185px; }
.w192 { width: 192px; }

th {
    padding: 0;
    font-weight: normal;
    background: #e6e6e6;
    border-right: 1px solid #bcbcbc;
}

thead th {
    height: 42px;
    border-bottom: 2px solid #9b9b9b;
}

.corner svg {
    margin: 0 4px 0 auto;
}

th.picked {
    background: #d0d0d0;
    color: #1d6b47;
    border-bottom-color: #1d6b47;
}

tbody th, td {
    height: 44px;
    border-bottom: 1px solid #d6d6d6;
}

tbody th {
    border-right-color: #9b9b9b;
    border-bottom-color: #bcbcbc;
}

td {
    padding: 0 15px 0 5px;
    line-height: 36px;
    background: #fff;
    border-right: 1px solid #dcdcdc;
    text-align: right;
    white-space: nowrap;
}

td:nth-child(2) {
    text-align: left;
}

.names td {
    padding-right: 0;
    font-weight: bold;
    text-align: left;
}

.data td {
    font-size: 30px;
}

.data td:nth-child(2) {
    font-size: 28px;
    padding-right: 0;
}

.data th {
    background: #d0d0d0;
    color: #1d6b47;
    border-right: 2px solid #1d6b47;
}

.data .sel {
    position: relative;
    background: #c6c6c6;
    border-right: 2px solid #1d6b47;
    border-bottom-color: #b0b0b0;
    box-shadow: inset 1px 0 #1d6b47;
}

.first .sel {
    background: #fff;
    box-shadow: inset 1px 1px #1d6b47;
}

.last .sel {
    border-bottom: 2px solid #1d6b47;
}

.handle {
    position: absolute;
    right: -4px;
    bottom: -4px;
    width: 7px;
    height: 7px;
    background: #1d6b47;
    border: 1px solid #fff;
    border-width: 1px 0 0 1px;
}

.arrow {
    border: 6px solid transparent;
}

.up-arrow { border-bottom-color: #777; border-top: none; }
.down-arrow { border-top-color: #555; border-bottom: none; }
.left-arrow { border-right-color: #555; border-left: none; }
.right-arrow { border-left-color: #555; border-right: none; }

.vscroll {
    display: flex;
    flex-direction: column;
    width: 25px;
    margin: 0 3px 0 3px;
}

.vscroll button, .vscroll .thumb {
    background: #fff;
    border: 1px solid #ababab;
}

.vscroll button {
    height: 26px;
}

.vscroll .thumb {
    flex: 3;
}

.vscroll .track {
    flex: 1;
    background: #dadada;
}

/* Sheet tabs */
.sheet-bar {
    display: flex;
    align-items: center;
    height: 35px;
    border-top: 1px solid #9b9b9b;
    font-size: 18px;
}

.sheet-nav {
    display: flex;
    justify-content: space-between;
    width: 119px;
    padding: 0 49px 0 31px;
    opacity: 0.5;
}

.sheet-tab {
    height: 30px;
    padding: 0 14px;
    align-self: flex-start;
}

.sheet-tab.current {
    width: 72px;
    padding: 0;
    background: #fff;
    border-bottom: 2px solid #1d6b47;
    color: #1d6b47;
    font-weight: bold;
}

.add {
    padding-left: 41px;
    margin-right: auto;
    height: 26px;
    border-left: 1px solid #888;
}

.hgrip {
    background: repeating-linear-gradient(#888 0 3px, transparent 3px 7px);
    margin: 0 18px;
}

.hscroll {
    display: flex;
    flex: 0 1 724px;
    height: 25px;
    margin-right: 28px;
    background: #dadada;
}

.hscroll button, .hscroll .thumb {
    background: #fff;
    border: 1px solid #ababab;
}

.hscroll button {
    width: 25px;
}

.hscroll .thumb {
    flex: 10;
}

.hscroll .track {
    flex: 1;
}

/* Status bar */
.status {
    display: flex;
    align-items: center;
    height: 32px;
    padding: 0 8px;
    background: #eee;
    border-top: 1px solid #bcbcbc;
    font-size: 15px;
}

.macro {
    margin-left: 20px;
}

.totals {
    display: flex;
    gap: 17px;
    margin: 0 20px 0 auto;
}

.views {
    display: flex;
    align-self: stretch;
}

.views button {
    width: 45px;
}

.views .on {
    background: #cdcdcd;
}

.zoom {
    display: flex;
    align-items: center;
    gap: 6px;
    padding-left: 4px;
}

.zoom input {
    appearance: none;
    width: 150px;
    height: 16px;
    background: linear-gradient(#777, #777) center / 1px 9px no-repeat, linear-gradient(#888, #888) center / 100% 1px no-repeat;
}

.zoom input::-webkit-slider-thumb {
    appearance: none;
    width: 6px;
    height: 16px;
    background: #444;
}

.zoom span {
    padding-left: 12px;
}

/* Video controls */
.player {
    position: absolute;
    left: 0;
    right: 0;
    bottom: 0;
    height: 200px;
    padding: 79px 24px 0;
    color: #fff;
    background: linear-gradient(rgba(0, 0, 0, 0), rgba(0, 0, 0, 0.1) 9%, rgba(0, 0, 0, 0.3) 30%, rgba(0, 0, 0, 0.45) 52%, rgba(0, 0, 0, 0.53) 65%, rgba(0, 0, 0, 0.6));
}

.seek {
    appearance: none;
    display: block;
    width: 100%;
    height: 20px;
    background: linear-gradient(90deg, #3f97e0 31.1%, transparent 31.1% 32.1%, #b4b4b4 32.1%) center / 100% 2px no-repeat;
}

.seek::-webkit-slider-thumb {
    appearance: none;
    width: 20px;
    height: 20px;
    border: 2px solid #3f97e0;
    border-radius: 50%;
    background: transparent;
}

.times {
    display: flex;
    justify-content: space-between;
    padding-top: 4px;
    font-size: 11px;
    line-height: 16px;
}

.controls {
    display: grid;
    grid-template-columns: 1fr auto 1fr;
    padding-top: 10px;
}

.set {
    display: flex;
}

.set.right {
    justify-content: flex-end;
}

.set button {
    width: 50px;
    height: 32px;
}

.set svg {
    fill: none;
    stroke: #fff;
    stroke-width: 2;
}

.set .skip {
    flex-direction: column;
    font-size: 12px;
    line-height: 12px;
}

.pointer {
    position: absolute;
    left: 505px;
    top: 996px;
}
```
